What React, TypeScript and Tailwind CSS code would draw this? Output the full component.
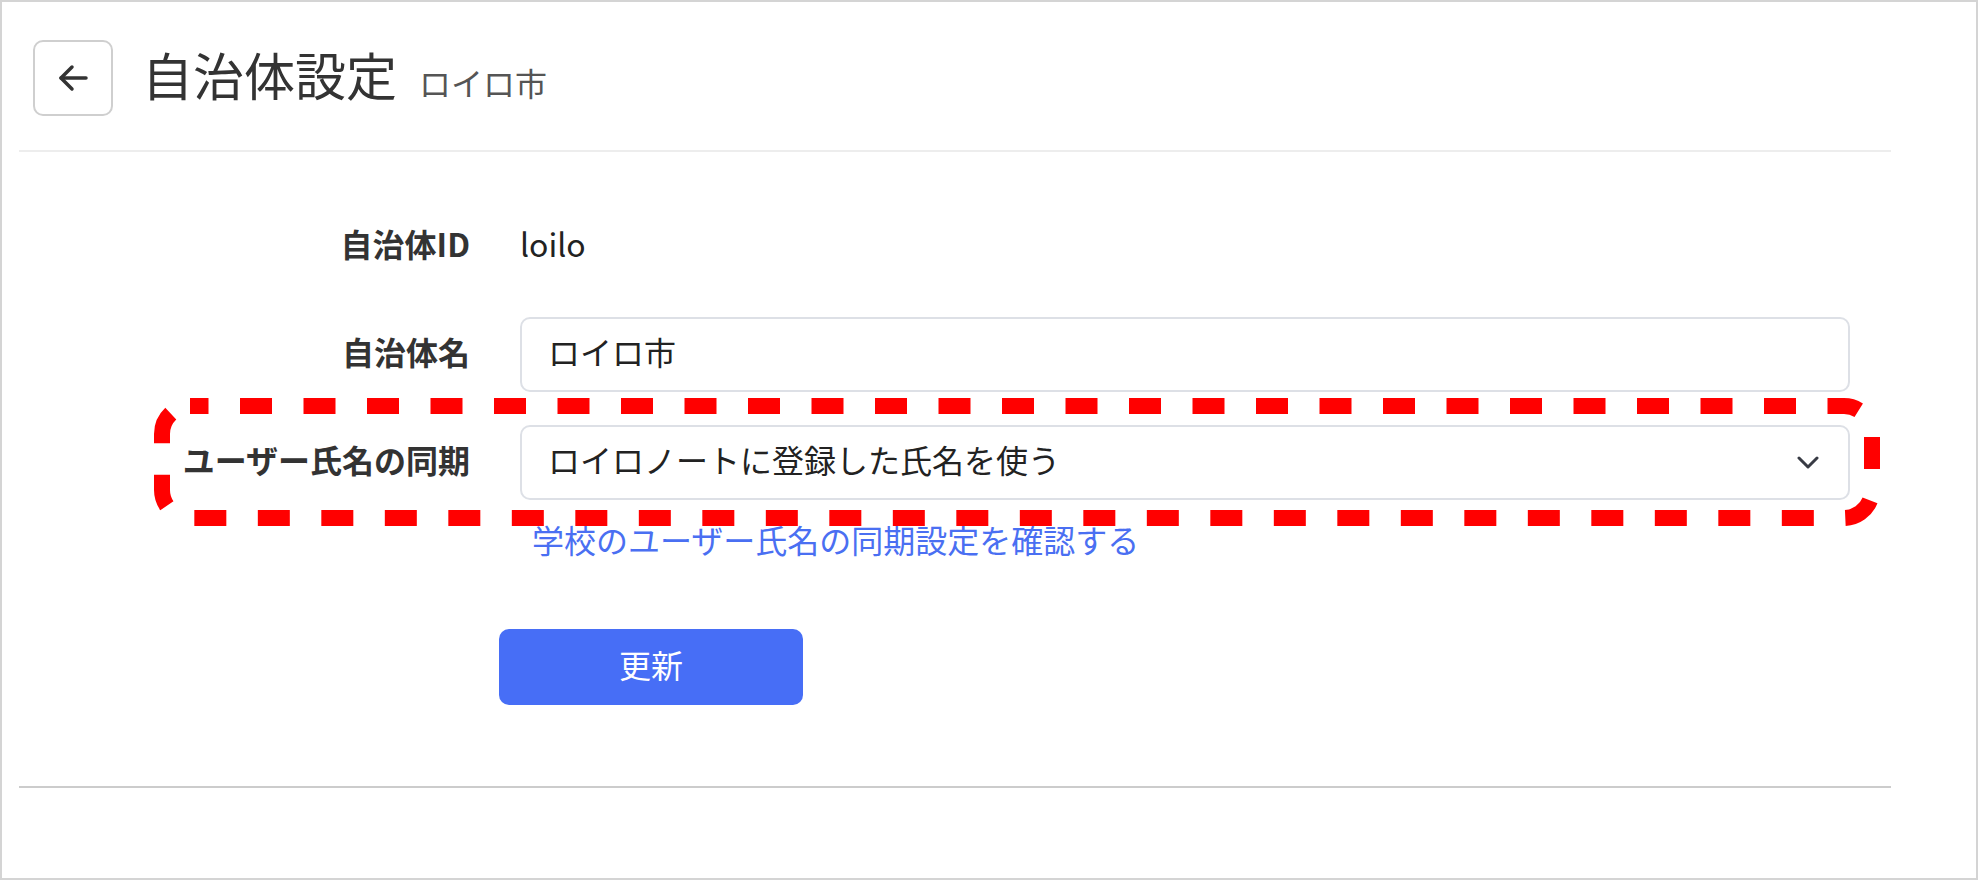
export default function App() {
  return (
    <div className="relative w-[1978px] h-[880px] overflow-hidden border-2 border-[#d4d4d4] bg-white font-['Noto_Sans_CJK_JP','Noto_Sans',sans-serif] text-[#333]">
      <div className="ml-[17px] w-[1872px]">
        <div className="flex items-center pt-[38px] pb-[34px] border-b-2 border-[#ededed]">
          <button className="ml-[14px] w-[80px] h-[76px] border-2 border-[#cfcfcf] rounded-[10px] flex items-center justify-center bg-white">
            <svg width="32" height="28" viewBox="0 0 32 28" fill="none" stroke="#333" strokeWidth="3.5" strokeLinecap="round" strokeLinejoin="round">
              <path d="M29 14H4" />
              <path d="M15 3L4 14L15 25" />
            </svg>
          </button>
          <div className="ml-[29px] pb-[8px] flex items-baseline gap-[22px]">
            <h1 className="text-[51px] leading-none text-[#333]">自治体設定</h1>
            <span className="text-[32px] leading-none text-[#555]">ロイロ市</span>
          </div>
        </div>

        <div className="mt-[57px] flex flex-col gap-[33px]">
          <div className="flex items-center h-[75px] pb-[8px]">
            <div className="w-[451px] text-right font-bold text-[32px]">自治体ID</div>
            <div className="ml-[50px] w-[1330px] text-[32px] text-[#222]">loilo</div>
          </div>
          <div className="flex items-center h-[75px]">
            <div className="w-[451px] pb-[8px] text-right font-bold text-[32px]">自治体名</div>
            <div className="ml-[50px] w-[1330px] h-[75px] border-2 border-[#dde0e6] rounded-[10px] px-[26px] pb-[8px] flex items-center text-[32px] text-[#222]">
              ロイロ市
            </div>
          </div>
          <div className="flex items-center h-[75px]">
            <div className="w-[451px] pb-[8px] text-right font-bold text-[32px]">ユーザー氏名の同期</div>
            <div className="ml-[50px] w-[1330px] h-[75px] border-2 border-[#dde0e6] rounded-[10px] pl-[26px] pr-[29px] flex items-center justify-between text-[32px] text-[#222]">
              <span className="pb-[8px]">ロイロノートに登録した氏名を使う</span>
              <svg width="22" height="13" viewBox="0 0 22 13" fill="none" stroke="#383b44" strokeWidth="3" strokeLinecap="round" strokeLinejoin="round">
                <path d="M2 2L11 11L20 2" />
              </svg>
            </div>
          </div>
        </div>

        <div className="ml-[501px] pl-[12px] mt-[19px] text-[32px] leading-[40px] text-[#4a6ff2]">
          学校のユーザー氏名の同期設定を確認する
        </div>

        <button className="ml-[480px] mt-[70px] w-[304px] h-[76px] rounded-[10px] bg-[#476ef6] text-white text-[32px] pb-[6px] flex items-center justify-center">
          更新
        </button>

        <div className="mt-[81px] border-t-2 border-[#cccccc]" />
      </div>

      <svg className="absolute left-[150px] top-[394px] pointer-events-none" width="1730" height="132" viewBox="0 0 1730 132" fill="none">
        <rect x="10" y="10" width="1710" height="112" rx="28" stroke="#ff0000" strokeWidth="16" strokeDasharray="32 31.5" strokeDashoffset="13.5" />
      </svg>
    </div>
  );
}
